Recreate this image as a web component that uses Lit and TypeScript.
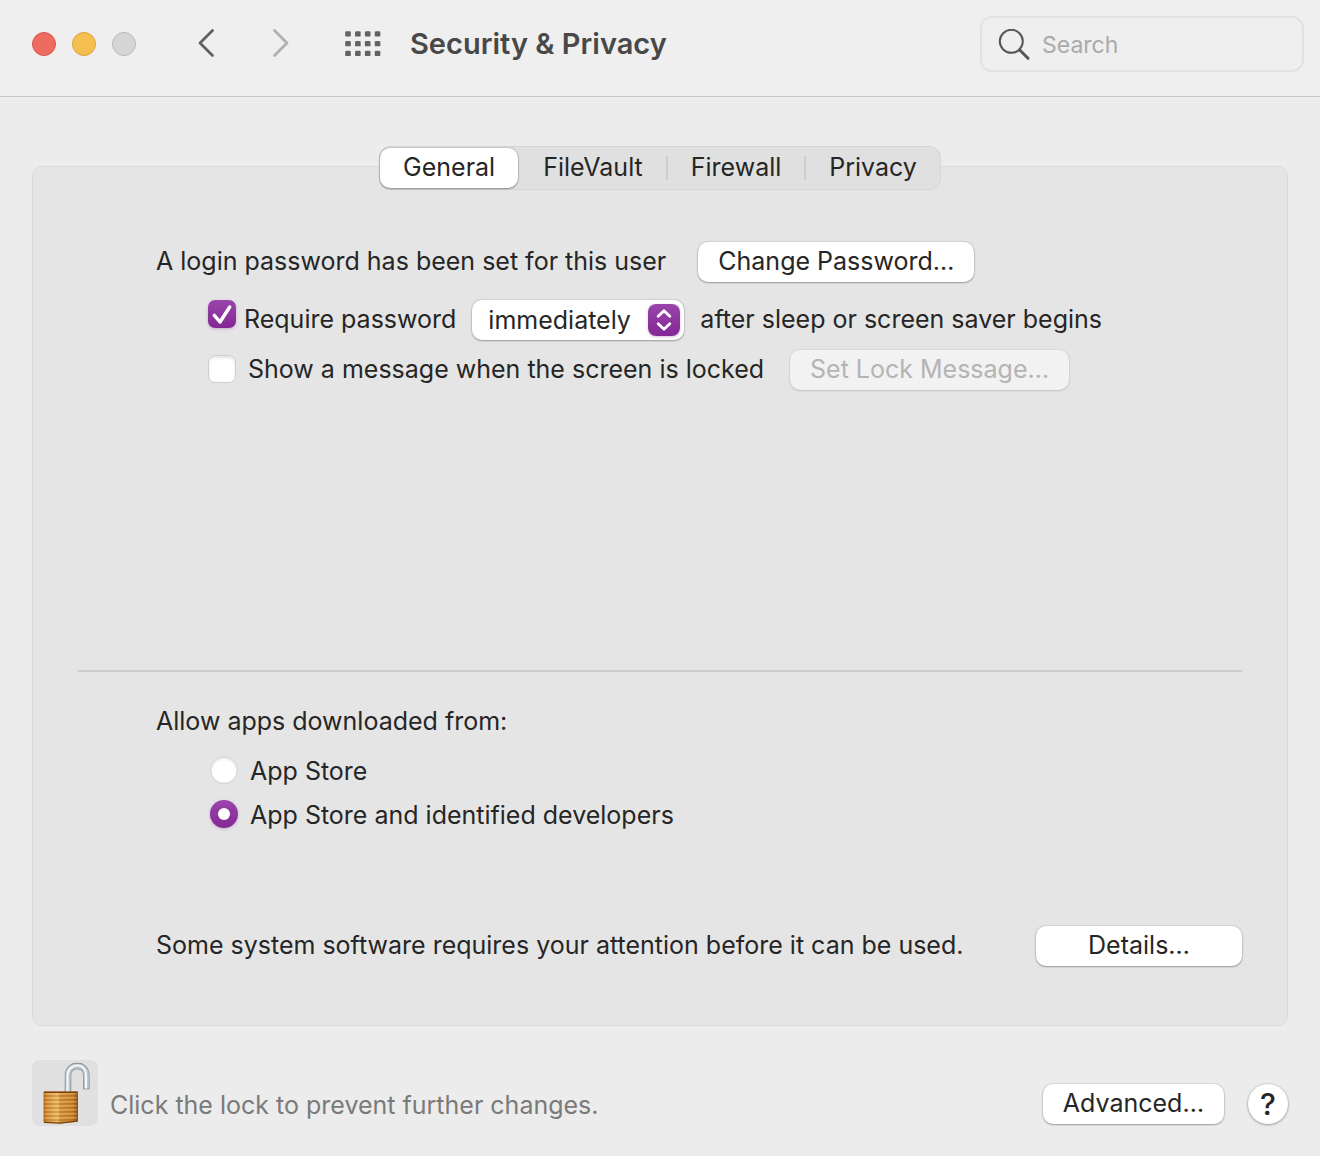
import { LitElement, html, css, svg } from "lit";
import { customElement, state } from "lit/decorators.js";

const TABS = ["General", "FileVault", "Firewall", "Privacy"];
const GRAIN = [36, 40, 44, 48, 52, 56, 60];

@customElement("padlock-icon")
class PadlockIcon extends LitElement {
  static styles = css`
    :host { display: block; }
    .art { display: block; width: 66px; height: 66px; }
  `;

  render() {
    return html`
      <svg class="art" viewBox="0 0 66 66" aria-hidden="true">
        <defs>
          <linearGradient id="front" x1="0" x2="1" y1="0" y2="0">
            <stop offset="0" stop-color="#b8711d" />
            <stop offset="0.12" stop-color="#d8933a" />
            <stop offset="0.42" stop-color="#efbd68" />
            <stop offset="0.47" stop-color="#d6953c" />
            <stop offset="0.85" stop-color="#c8822b" />
            <stop offset="1" stop-color="#8f4f12" />
          </linearGradient>
          <linearGradient id="steel" gradientUnits="userSpaceOnUse" x1="0" x2="0" y1="2" y2="34">
            <stop offset="0" stop-color="#717b80" />
            <stop offset="0.4" stop-color="#8e999e" />
            <stop offset="1" stop-color="#7d878b" />
          </linearGradient>
        </defs>
        <path d="M36 34V15.500C36 9.500 40 6 45.300 6S54.300 9.500 54.300 15.500V29.300" fill="none" stroke="url(#steel)" stroke-width="6.600" />
        <path d="M36 34V15.500C36 9.500 40 6 45.300 6S54.300 9.500 54.300 15.500V28.500" fill="none" stroke="#bcc8cd" stroke-width="5" />
        <path d="M35.500 34V15.500C35.500 9.500 40 5.500 45.300 5.500S54 9.500 54 15.500V28.500" fill="none" stroke="#f4f8f9" stroke-width="2" />
        <path d="M11.500 33C11.500 32 12 31.600 13 31.600H44.500C45.500 31.600 46 32 46 33V60.500C46 61.200 45.600 61.600 45 61.700L28 63.600L13 62.800C12 62.700 11.500 62.200 11.500 61.400Z" fill="url(#front)" />
        ${GRAIN.map(y => svg`<path d=${`M12 ${y}H27.500L46 ${y - 0.4}`} fill="none" stroke="#8a4d10" stroke-opacity="0.3" stroke-width="1.300" />`)}
        ${GRAIN.map(y => svg`<path d=${`M13 ${y - 2}H27.500L45 ${y - 2.4}`} fill="none" stroke="#ffe2a0" stroke-opacity="0.3" stroke-width="1.300" />`)}
        <path d="M12 32.200H45.500" stroke="#7c3f13" stroke-width="1.400" />
        <path d="M12 62.400L28 63.200L45.500 61.200" fill="none" stroke="#74400f" stroke-width="1.200" />
      </svg>
    `;
  }
}

@customElement("app-root")
export class AppRoot extends LitElement {
  @state() private tab = "General";

  static styles = css`
    :host {
      display: flex;
      flex-direction: column;
      min-height: 100vh;
      box-sizing: border-box;
      background: #ececec;
      color: #262626;
      font-family: Inter, "Liberation Sans", sans-serif;
      font-size: 25px;
      line-height: 40px;
    }
    * { box-sizing: border-box; }
    button, input, select { font: inherit; color: inherit; margin: 0; }
    button { border: 0; padding: 0; background: none; white-space: nowrap; }

    .toolbar {
      display: flex;
      align-items: center;
      padding: 16px 16px 24px 32px;
      background: #efefef;
      border-bottom: 1px solid #c6c6c6;
    }
    .lights { display: flex; gap: 16px; }
    .light { width: 24px; height: 24px; border-radius: 50%; border: 1px solid; }
    .close { background: #ee6b60; border-color: #d5564b; }
    .minimise { background: #f5bf4f; border-color: #d9a23c; }
    .zoom { background: #d5d5d5; border-color: #b9b9b9; }
    .nav { display: flex; gap: 42px; margin-left: 54px; padding-bottom: 2px; }
    .icon { display: block; width: 32px; height: 32px; }
    .grid { margin-left: 49px; }
    .wide { display: block; width: 36px; height: 26px; }
    .title { flex: 1; margin: 0 0 0 29px; font-size: 29px; font-weight: 600; line-height: 40px; color: #484848; }
    .search {
      display: flex;
      align-items: center;
      gap: 12px;
      width: 324px;
      height: 56px;
      padding: 2px 16px 0;
      border: 2px solid #e2e2e2;
      border-radius: 12px;
    }
    .search-text { flex: 1; min-width: 0; border: 0; padding: 0; background: none; outline: none; font-size: 23px; }
    .search-text::placeholder { color: #aaaaaa; opacity: 1; }

    .content { flex: 1; display: flex; flex-direction: column; padding: 49px 32px 0; }
    .tabs {
      position: relative;
      z-index: 1;
      align-self: center;
      display: flex;
      align-items: center;
      height: 44px;
      padding: 0 1px;
      border-radius: 12px;
      background: #e0e0e0;
      box-shadow: inset 0 0 0 1px #d6d6d6;
    }
    .tab { height: 40px; padding: 0 23px 2px; border-radius: 10px; line-height: 38px; }
    .tab.on { background: #ffffff; box-shadow: 0 0 1px 1px #00000018, 0 1px 2px #00000050; }
    .sep { width: 2px; height: 24px; background: #cdcdcd; }
    .sep.clear { background: none; }

    .panel {
      flex: 1;
      display: flex;
      flex-direction: column;
      margin-top: -24px;
      padding: 75px 45px 59px;
      border: 1px solid #dadada;
      border-radius: 10px;
      background: #e5e5e5;
    }
    .group { display: flex; flex-direction: column; padding-left: 78px; }
    .access { flex: 1; }
    .row { display: flex; align-items: center; }
    .text { line-height: 38px; padding-bottom: 2px; }
    .indent { padding-left: 52px; }
    .login { gap: 32px; margin-bottom: 18px; }
    .require { gap: 16px; margin-bottom: 10px; }
    .message { gap: 26px; }
    .choice { display: flex; align-items: center; gap: 12px; }
    .require .choice { gap: 8px; }
    .radios { padding-left: 54px; margin: 10px 0 0; }
    .sources { border: 0; margin: 29px 0 0; min-width: 0; padding: 0 0 0 78px; }
    .legend { padding: 0; }
    .option { margin-bottom: 4px; }

    .push {
      height: 40px;
      padding: 0 20px 2px;
      border-radius: 10px;
      background: #ffffff;
      line-height: 38px;
      box-shadow: 0 0 1px 1px #00000014, 0 1px 2px #00000048;
    }
    .push:disabled { background: #f2f2f2; color: #b4b4b4; box-shadow: 0 0 1px 1px #0000000c, 0 1px 2px #00000020; }
    .details { width: 206px; }

    .box, .dot {
      appearance: none;
      display: grid;
      place-items: center;
      flex: none;
      width: 28px;
      height: 28px;
      margin-bottom: 2px;
      background: #ffffff;
      border: 1px solid #cfcfcf;
      box-shadow: inset 0 2px 3px #0000001c;
    }
    .box { border-radius: 7px; }
    .dot { border-radius: 50%; }
    .box:checked, .dot:checked {
      border: 0;
      background: linear-gradient(#9a46ab, #832695);
      box-shadow: 0 1px 3px #8326954d;
    }
    .dot:checked::before { content: ""; width: 12px; height: 12px; border-radius: 50%; background: #ffffff; }
    .tick-holder { position: relative; }
    .require .tick-holder { align-self: flex-start; }
    .tick { position: absolute; inset: 0; width: 28px; height: 28px; pointer-events: none; visibility: hidden; }
    .box:checked + .tick { visibility: visible; }

    .picker { position: relative; }
    .select {
      appearance: none;
      display: block;
      height: 40px;
      width: 212px;
      padding: 0 48px 3px 16px;
      border: 0;
      border-radius: 10px;
      background: #ffffff;
      box-shadow: 0 0 1px 1px #00000014, 0 1px 2px #00000048;
    }
    .chip {
      position: absolute;
      top: 4px;
      right: 4px;
      width: 32px;
      height: 32px;
      border-radius: 8px;
      background: linear-gradient(#9a46ab, #832695);
      box-shadow: 0 1px 3px #8326954d;
      pointer-events: none;
    }

    .rule { width: 100%; height: 2px; margin: 0; border: 0; background: #cccccc; }
    .attention { justify-content: space-between; gap: 24px; margin-top: 91px; padding-left: 78px; }

    .footer { display: flex; align-items: center; padding: 34px 32px 30px; }
    .lock { border-radius: 8px; background: #e0e0e0; }
    .hint { flex: 1; margin: 24px 0 0 12px; color: #7a7a7a; }
    .actions { display: flex; align-items: center; gap: 24px; margin-top: 22px; }
    .help {
      width: 40px;
      height: 40px;
      border-radius: 50%;
      background: #ffffff;
      font-size: 30px;
      font-weight: 500;
      box-shadow: 0 0 1px 1px #00000014, 0 1px 3px #00000048;
    }
  `;

  private renderToolbar() {
    return html`
      <header class="toolbar">
        <div class="lights">
          <button class="light close" aria-label="Close"></button>
          <button class="light minimise" aria-label="Minimise"></button>
          <button class="light zoom" aria-label="Zoom" disabled></button>
        </div>
        <nav class="nav">
          <button aria-label="Back">
            <svg class="icon" viewBox="0 0 32 32"><path d="M22.500 3.500L10 16L22.500 28.500" fill="none" stroke="#606060" stroke-width="2.800" stroke-linecap="round" stroke-linejoin="round" /></svg>
          </button>
          <button aria-label="Forward" disabled>
            <svg class="icon" viewBox="0 0 32 32"><path d="M10.500 3.500L23 16L10.500 28.500" fill="none" stroke="#b0b0b0" stroke-width="2.800" stroke-linecap="round" stroke-linejoin="round" /></svg>
          </button>
        </nav>
        <button class="grid" aria-label="Show All">
          <svg class="wide" viewBox="0 0 36 26">
            ${[0, 1, 2].map(r => [0, 1, 2, 3].map(c => svg`<rect x=${0.2 + c * 9.85} y=${0.2 + r * 9.75} width="5.600" height="5.400" rx="1.200" fill="#636363" />`))}
          </svg>
        </button>
        <h1 class="title">Security &amp; Privacy</h1>
        <label class="search">
          <svg class="icon" viewBox="0 0 32 32" aria-hidden="true">
            <circle cx="13.300" cy="12.300" r="11.500" fill="none" stroke="#565656" stroke-width="2" />
            <path d="M21.500 20.800L30 29.300" stroke="#565656" stroke-width="3" stroke-linecap="round" />
          </svg>
          <input class="search-text" type="search" placeholder="Search" aria-label="Search" />
        </label>
      </header>
    `;
  }

  private renderTabs() {
    const active = TABS.indexOf(this.tab);
    return html`
      <div class="tabs" role="tablist">
        ${TABS.map((name, i) => html`
          ${i > 0 ? html`<span class="sep ${i === active || i - 1 === active ? "clear" : ""}"></span>` : ""}
          <button class="tab ${i === active ? "on" : ""}" role="tab" aria-selected=${i === active} @click=${() => (this.tab = name)}>${name}</button>
        `)}
      </div>
    `;
  }

  render() {
    return html`
      ${this.renderToolbar()}
      <main class="content">
        ${this.renderTabs()}
        <section class="panel">
          <div class="group access">
            <div class="row login">
              <span class="text">A login password has been set for this user</span>
              <button class="push">Change Password…</button>
            </div>
            <div class="row indent require">
              <div class="choice">
                <span class="tick-holder">
                  <input class="box" id="require" type="checkbox" checked />
                  <svg class="tick" viewBox="0 0 28 28" aria-hidden="true"><path d="M6.300 15.300L12 22L21.700 7" fill="none" stroke="#ffffff" stroke-width="3.400" stroke-linecap="round" stroke-linejoin="round" /></svg>
                </span>
                <label class="text" for="require">Require password</label>
              </div>
              <span class="picker">
                <select class="select" id="delay" aria-label="Delay">
                  <option>immediately</option>
                </select>
                <svg class="chip" viewBox="0 0 32 32" aria-hidden="true"><path d="M10.200 12.200L16 6.700L21.800 12.200M10.200 19.800L16 25.300L21.800 19.800" fill="none" stroke="#ffffff" stroke-width="2.800" stroke-linecap="round" stroke-linejoin="round" /></svg>
              </span>
              <label class="text" for="delay">after sleep or screen saver begins</label>
            </div>
            <div class="row indent message">
              <div class="choice">
                <input class="box" id="message" type="checkbox" />
                <label class="text" for="message">Show a message when the screen is locked</label>
              </div>
              <button class="push" disabled>Set Lock Message…</button>
            </div>
          </div>
          <hr class="rule" />
          <fieldset class="sources">
            <legend class="legend">Allow apps downloaded from:</legend>
            <div class="radios">
              <div class="choice option">
                <input class="dot" id="store" type="radio" name="source" />
                <label for="store">App Store</label>
              </div>
              <div class="choice">
                <input class="dot" id="identified" type="radio" name="source" checked />
                <label for="identified">App Store and identified developers</label>
              </div>
            </div>
          </fieldset>
          <div class="row attention">
            <span class="text">Some system software requires your attention before it can be used.</span>
            <button class="push details">Details…</button>
          </div>
        </section>
      </main>
      <footer class="footer">
        <button class="lock" aria-label="Lock"><padlock-icon></padlock-icon></button>
        <p class="hint">Click the lock to prevent further changes.</p>
        <div class="actions">
          <button class="push">Advanced…</button>
          <button class="help" aria-label="Help">?</button>
        </div>
      </footer>
    `;
  }
}
